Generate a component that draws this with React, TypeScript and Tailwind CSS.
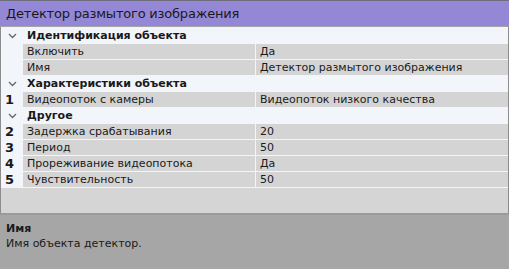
import React from 'react';

type Row =
  | { kind: 'group'; label: string }
  | { kind: 'item'; num?: string; name: string; value: string };

const rows: Row[] = [
  { kind: 'group', label: 'Идентификация объекта' },
  { kind: 'item', name: 'Включить', value: 'Да' },
  { kind: 'item', name: 'Имя', value: 'Детектор размытого изображения' },
  { kind: 'group', label: 'Характеристики объекта' },
  { kind: 'item', num: '1', name: 'Видеопоток с камеры', value: 'Видеопоток низкого качества' },
  { kind: 'group', label: 'Другое' },
  { kind: 'item', num: '2', name: 'Задержка срабатывания', value: '20' },
  { kind: 'item', num: '3', name: 'Период', value: '50' },
  { kind: 'item', num: '4', name: 'Прореживание видеопотока', value: 'Да' },
  { kind: 'item', num: '5', name: 'Чувствительность', value: '50' },
];

function Chevron() {
  return (
    <svg width="9" height="6" viewBox="0 0 9 6" className="block">
      <polyline points="1,1 4.5,4.5 8,1" fill="none" stroke="#6b6b6b" strokeWidth="1.4" />
    </svg>
  );
}

function App() {
  return (
    <div className="w-[509px] h-[269px] flex flex-col overflow-hidden text-[#1a1a1a] font-['DejaVu_Sans',sans-serif]">
      {/* Title */}
      <div className="h-[27px] shrink-0 bg-[#9488d6] border-t border-[#6e6e7e] border-b border-b-[#a3a3a8] flex items-center px-[6px] text-[13px] tracking-[-0.2px]">
        Детектор размытого изображения
      </div>

      {/* Property grid */}
      <div className="flex-1 flex flex-col border-x border-[#8c8c8c] bg-[#f2f5fa]">
        <div className="flex flex-col gap-px pt-px">
          {rows.map((r, i) =>
            r.kind === 'group' ? (
              <div key={i} className="h-[15px] flex items-center">
                <div className="w-[22px] flex justify-center pl-[1px]">
                  <Chevron />
                </div>
                <div className="pl-[4px] text-[11px] font-bold leading-none">{r.label}</div>
              </div>
            ) : (
              <div key={i} className="h-[15px] flex">
                <div className="w-[22px] flex items-center pl-[4px] text-[13px] font-bold leading-none">
                  {r.num}
                </div>
                <div className="w-[232px] bg-[#d4d4d4] flex items-center pl-[4px] text-[11px] leading-none">
                  {r.name}
                </div>
                <div className="w-px" />
                <div className="flex-1 bg-[#d4d4d4] flex items-center pl-[4px] text-[11px] leading-none">
                  {r.value}
                </div>
              </div>
            )
          )}
        </div>
        <div className="flex-1 mt-px bg-[#d5d5d5]" />
      </div>

      {/* Description */}
      <div className="h-[56px] shrink-0 bg-[#a6a6a6] border-t-2 border-[#9a9a9a] px-[6px] pt-[6px] text-[11px] leading-[15px]">
        <div className="font-bold">Имя</div>
        <div>Имя объекта детектор.</div>
      </div>
    </div>
  );
}

export default App;
